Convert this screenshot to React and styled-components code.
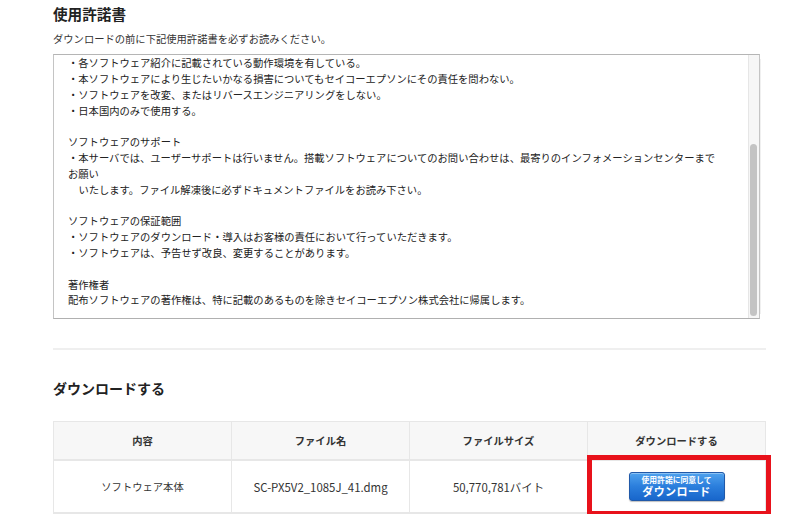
import React, { useLayoutEffect, useRef, useState } from "react";
import styled, { createGlobalStyle } from "styled-components";

const Global = createGlobalStyle`
  html, body { margin: 0; padding: 0; background: #fff; }
  body {
    font-family: "Noto Sans CJK JP", "Noto Sans", sans-serif;
    color: #333;
  }
`;

const Page = styled.div`
  width: 713px;
  padding: 4px 0 0 53px;
`;

const Title = styled.h2`
  margin: 0;
  font-size: 14.6px;
  line-height: 20px;
  font-weight: 700;
  color: #222;
`;

const Lead = styled.p`
  margin: 7px 0 0;
  font-size: 10.3px;
  line-height: 16px;
`;

const LicenseBox = styled.div`
  box-sizing: border-box;
  display: flex;
  margin-top: 7px;
  width: 707px;
  height: 265px;
  border: 1px solid #c4c4c4;
  border-top-color: #b5b5b5;
  border-bottom-color: #b0b0b0;
  box-shadow: 6px 0 0 -5px #f0f0f0;
`;

const Viewport = styled.div`
  flex: 1;
  overflow: hidden;
  padding: 8px 20px 10px 14px;
  font-size: 10.3px;
  line-height: 15.8px;
  color: #222;
`;

const Track = styled.div`
  position: relative;
  flex: none;
  width: 10px;
  background: #f6f6f6;
  border-left: 1px solid #e6e6e6;
`;

const Thumb = styled.div`
  position: absolute;
  left: 1px;
  width: 7px;
  border-radius: 4px;
  background: #c3c3c3;
`;

const Line = styled.div`
  min-height: 15.8px;
  white-space: pre;
  padding-left: ${(p) => (p.$indent ? "10.4px" : "0")};
`;

const Rule = styled.hr`
  margin: 29px 0 0;
  border: 0;
  height: 2px;
  background: #efefef;
`;

const SectionTitle = styled.h3`
  margin: 28px 0 0;
  font-size: 14px;
  line-height: 20px;
  font-weight: 700;
  color: #222;
`;

const Table = styled.table`
  margin-top: 23px;
  width: 713px;
  border-collapse: collapse;
  table-layout: fixed;
  font-size: 10.3px;
`;

const Th = styled.th`
  height: 37px;
  padding: 0;
  background: #f7f7f7;
  border: 1px solid #e7e7e7;
  border-bottom-width: 2px;
  font-weight: 700;
  color: #333;
  text-align: center;
`;

const Td = styled.td`
  position: relative;
  height: 51px;
  padding: 0;
  border: 1px solid #e7e7e7;
  border-bottom-width: 2px;
  text-align: center;
  color: #333;
  font-size: ${(p) => (p.$latin ? "11.4px" : "10.3px")};
`;

const Highlight = styled.span`
  position: absolute;
  left: -1px;
  right: -6px;
  top: -6px;
  bottom: -4px;
  border: 5px solid #e8121b;
  pointer-events: none;
`;

const DownloadButton = styled.button`
  box-sizing: border-box;
  width: 96px;
  height: 29px;
  padding: 0;
  border: 1px solid #2159a8;
  border-radius: 3px;
  background: linear-gradient(#4fa2ee 0%, #2b7edc 50%, #1866cb 100%);
  box-shadow: inset 0 1px 0 rgba(255, 255, 255, 0.35), 0 1px 1px rgba(0, 0, 0, 0.25);
  color: #fff;
  font-family: inherit;
  font-weight: 700;
  display: inline-flex;
  flex-direction: column;
  align-items: center;
  justify-content: center;
  vertical-align: middle;
  cursor: pointer;
`;

const BtnSmall = styled.span`
  font-size: 7.8px;
  line-height: 10px;
`;

const BtnLarge = styled.span`
  font-size: 11px;
  line-height: 13px;
  letter-spacing: 0.4px;
`;

const hidden = [
  "ソフトウェア使用許諾書",
  "",
  "本ソフトウェアをダウンロードする前に、以下の内容をよくお読みください。",
  "お客様が本ソフトウェアをダウンロードされた場合、本使用許諾書に同意したものとみなします。",
  "",
  "使用条件",
  "本ソフトウェアは、以下の条件を満たす場合にのみ使用できます。",
  "・エプソン製品と組み合わせて使用する。",
];

const visible = [
  "・各ソフトウェア紹介に記載されている動作環境を有している。",
  "・本ソフトウェアにより生じたいかなる損害についてもセイコーエプソンにその責任を問わない。",
  "・ソフトウェアを改変、またはリバースエンジニアリングをしない。",
  "・日本国内のみで使用する。",
  "",
  "ソフトウェアのサポート",
  "・本サーバでは、ユーザーサポートは行いません。搭載ソフトウェアについてのお問い合わせは、最寄りのインフォメーションセンターまで",
  "お願い",
  { t: "いたします。ファイル解凍後に必ずドキュメントファイルをお読み下さい。", indent: true },
  "",
  "ソフトウェアの保証範囲",
  "・ソフトウェアのダウンロード・導入はお客様の責任において行っていただきます。",
  "・ソフトウェアは、予告せず改良、変更することがあります。",
  "",
  "著作権者",
  "配布ソフトウェアの著作権は、特に記載のあるものを除きセイコーエプソン株式会社に帰属します。",
];

export default function App() {
  const viewRef = useRef(null);
  const trackRef = useRef(null);
  const [thumb, setThumb] = useState({ top: 0, height: 0 });

  useLayoutEffect(() => {
    const v = viewRef.current;
    const t = trackRef.current;
    if (!v || !t) return;
    v.scrollTop = v.scrollHeight;
    const trackH = t.clientHeight - 3;
    const ratio = v.clientHeight / v.scrollHeight;
    setThumb({
      top: 1 + (v.scrollTop / v.scrollHeight) * trackH,
      height: Math.max(20, ratio * trackH),
    });
  }, []);

  return (
    <>
      <Global />
      <Page>
        <Title>使用許諾書</Title>
        <Lead>ダウンロードの前に下記使用許諾書を必ずお読みください。</Lead>
        <LicenseBox>
          <Viewport ref={viewRef}>
            {[...hidden, ...visible].map((l, i) =>
              typeof l === "string" ? (
                <Line key={i}>{l}</Line>
              ) : (
                <Line key={i} $indent={l.indent}>{l.t}</Line>
              )
            )}
          </Viewport>
          <Track ref={trackRef}>
            <Thumb style={{ top: thumb.top, height: thumb.height }} />
          </Track>
        </LicenseBox>
        <Rule />
        <SectionTitle>ダウンロードする</SectionTitle>
        <Table>
          <thead>
            <tr>
              <Th>内容</Th>
              <Th>ファイル名</Th>
              <Th>ファイルサイズ</Th>
              <Th>ダウンロードする</Th>
            </tr>
          </thead>
          <tbody>
            <tr>
              <Td>ソフトウェア本体</Td>
              <Td $latin>SC-PX5V2_1085J_41.dmg</Td>
              <Td $latin>50,770,781バイト</Td>
              <Td>
                <DownloadButton type="button">
                  <BtnSmall>使用許諾に同意して</BtnSmall>
                  <BtnLarge>ダウンロード</BtnLarge>
                </DownloadButton>
                <Highlight />
              </Td>
            </tr>
          </tbody>
        </Table>
      </Page>
    </>
  );
}
